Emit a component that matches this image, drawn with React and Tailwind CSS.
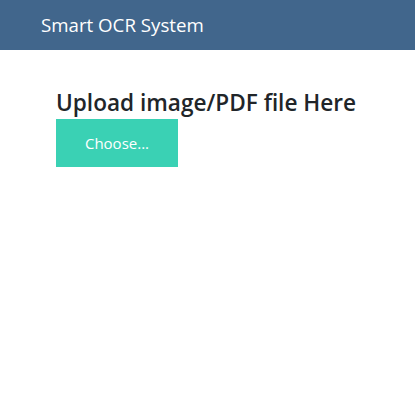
export default function App() {
  return (
    <div className="min-h-[396px] bg-white" style={{ fontFamily: '"Open Sans", "Noto Sans", sans-serif' }}>
      <header className="h-[50px] bg-[#41668c] flex items-center pl-[41px]">
        <span className="text-[18.7px] text-white leading-none">Smart OCR System</span>
      </header>
      <main className="pl-[56px] pt-[36px]">
        <h2 className="text-[22.6px] font-semibold text-[#212529] leading-[33px]">Upload image/PDF file Here</h2>
        <button className="w-[122px] h-[48px] bg-[#3ad1b4] text-white text-[15px] flex items-center justify-center">
          Choose...
        </button>
      </main>
    </div>
  );
}
